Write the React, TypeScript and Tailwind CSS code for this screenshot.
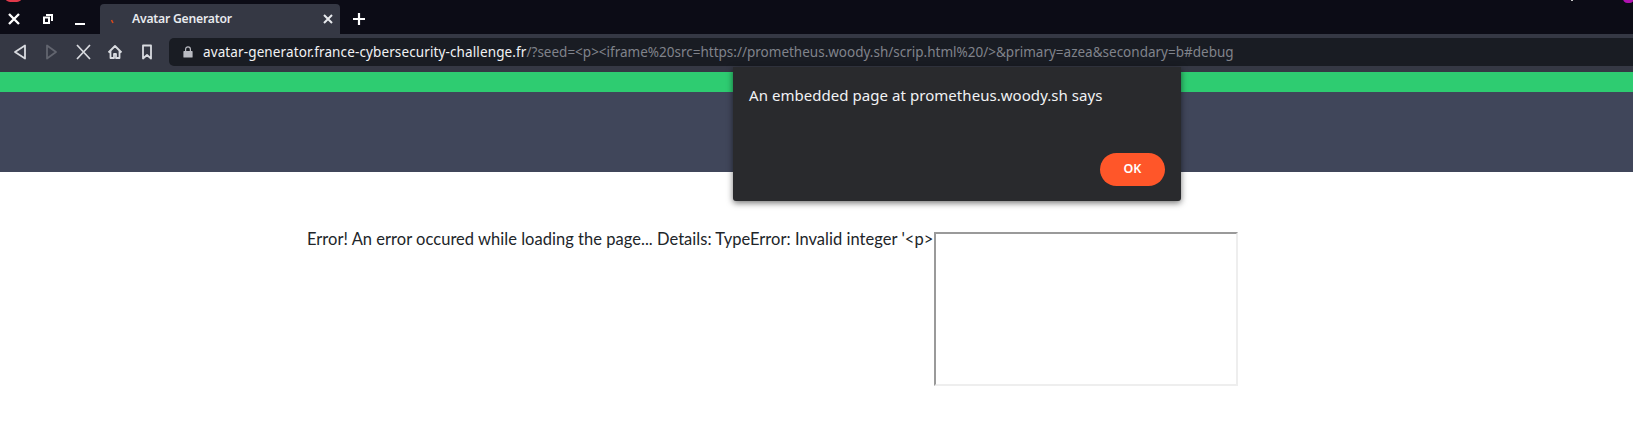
import React from "react";

const ui = { fontFamily: '"Noto Sans", "Open Sans", sans-serif' };

function Stroke({ children, className = "", w = 20 }: { children: React.ReactNode; className?: string; w?: number }) {
  return (
    <svg width={w} height={w} viewBox={`0 0 ${w} ${w}`} fill="none" stroke="currentColor" strokeWidth={1.8} className={className}>
      {children}
    </svg>
  );
}

export default function App() {
  return (
    <div className="relative h-[426px] w-[1633px] overflow-hidden bg-white">
      {/* Browser chrome */}
      <header style={ui}>
        <div className="relative flex h-[34px] items-end bg-[#0c0c16] text-white">
          <div className="absolute left-[5px] top-[-8px] h-[10px] w-[17px] rounded-full bg-[#e0394a]" />
          <div className="absolute left-[1571px] top-0 h-[1px] w-[2px] bg-[#c8c8c8]" />
          <div className="absolute right-[-1px] top-[-6px] h-[9px] w-[11px] rounded-full bg-[#b012b0]" />
          <div className="flex h-[34px] w-[100px] items-center pl-[4px] pt-[4px]">
            <div className="flex w-[20px] justify-center">
              <Stroke w={12}><path d="M1 1l10 10M11 1L1 11" strokeWidth={2.4} /></Stroke>
            </div>
            <div className="ml-[14px] flex w-[20px] justify-center">
              <svg width="10" height="10" viewBox="0 0 10 10" fill="none" stroke="currentColor">
                <path d="M3 1h6v6" strokeWidth={2} />
                <rect x="1" y="3.5" width="5" height="5.5" strokeWidth={2} />
              </svg>
            </div>
            <div className="ml-[12px] flex w-[20px] justify-center pt-[9px]">
              <div className="h-[2px] w-[10px] bg-white" />
            </div>
          </div>
          <div className="flex h-[30px] w-[240px] items-center rounded-t-[4px] bg-[#353844] pl-[2px] pr-[4px]">
            <svg width="16" height="16" viewBox="0 0 16 16" className="shrink-0">
              <path d="M9.5 9l1.5 3" stroke="#d9481c" strokeWidth={1.6} fill="none" />
            </svg>
            <span className="ml-[14px] flex-1 text-[12.2px] font-semibold tracking-[-0.22px] text-[#e8eaee]">Avatar Generator</span>
            <Stroke w={10} className="mr-[3px] text-[#e8eaee]"><path d="M1 1l8 8M9 1L1 9" strokeWidth={2} /></Stroke>
          </div>
          <div className="ml-[12px] flex h-[34px] items-center pt-[4px]">
            <svg width="14" height="14" viewBox="0 0 14 14" stroke="currentColor" strokeWidth={2.2}>
              <path d="M7 1v12M1 7h12" />
            </svg>
          </div>
        </div>
        <div className="flex h-[38px] items-start bg-[#353844] pl-[10px] pt-[4px] text-[#d9dbe0]">
          <div className="flex h-[28px] items-center gap-[12px]">
            <Stroke><path d="M15 3.5v13L5 10z" strokeLinejoin="round" /></Stroke>
            <Stroke className="text-[#62656f]"><path d="M5 3.5v13l9-6.5z" strokeLinejoin="round" /></Stroke>
            <Stroke><path d="M3 3l13 14M16 3L3 17" strokeWidth={1.7} /></Stroke>
            <Stroke><path d="M2.5 10.5L9 4l6.5 6.5M4.5 9v7H8v-4h2v4h3.5V9" strokeLinejoin="round" /></Stroke>
            <Stroke><path d="M5 3.5h8v13l-4-3.5-4 3.5z" strokeLinejoin="round" /></Stroke>
          </div>
          <div className="ml-[11px] flex h-[28px] flex-1 items-center rounded-l-[5px] bg-[#191c23] pl-[14px] text-[13.5px] tracking-[0.12px]">
            <svg width="10" height="12" viewBox="0 0 10 12" fill="#b9bbc2">
              <path d="M1 5h8a.6.6 0 0 1 .6.6V11a.6.6 0 0 1-.6.6H1a.6.6 0 0 1-.6-.6V5.6A.6.6 0 0 1 1 5z" />
              <path d="M2.6 5V3.2a2.4 2.4 0 0 1 4.8 0V5" fill="none" stroke="#b9bbc2" strokeWidth={1.2} />
            </svg>
            <span className="ml-[10px] whitespace-nowrap text-[#f1f2f4]">
              avatar-generator.france-cybersecurity-challenge.fr
              <span className="tracking-[0px] text-[#80838b]">/?seed=&lt;p&gt;&lt;iframe%20src=https://prometheus.woody.sh/scrip.html%20/&gt;&amp;primary=azea&amp;secondary=b#debug</span>
            </span>
          </div>
        </div>
      </header>

      {/* Page */}
      <div className="h-[20px] bg-[#2ecc71]" />
      <div className="h-[80px] bg-[#40465a]" />
      <main className="flex items-start pl-[307px] pt-[60px] text-[16.5px] leading-[15px] text-[#212529]" style={{ fontFamily: 'Lato, sans-serif' }}>
        <span className="w-[627px] whitespace-nowrap tracking-[0.03px]">Error! An error occured while loading the page... Details: TypeError: Invalid integer '&lt;p&gt;</span>
        <div className="h-[154px] w-[304px] shrink-0 border-2 border-t-[#9a9a9a] border-l-[#9a9a9a] border-r-[#eeeeee] border-b-[#eeeeee] bg-white" />
      </main>

      {/* Dialog */}
      <div
        className="absolute left-[733px] top-[67px] flex h-[134px] w-[448px] flex-col justify-between rounded-b-[3px] bg-[#292a2d] pb-[15px] pl-[16px] pr-[16px] pt-[18px] shadow-[0_2px_6px_rgba(0,0,0,0.55)]"
        style={ui}
      >
        <p className="text-[15px] leading-[20px] tracking-[0.05px] text-[#f1f2f4]">An embedded page at prometheus.woody.sh says</p>
        <div className="flex justify-end">
          <button className="h-[33px] w-[65px] rounded-full bg-[#ff5629] text-[12.5px] font-semibold text-white">OK</button>
        </div>
      </div>
    </div>
  );
}
